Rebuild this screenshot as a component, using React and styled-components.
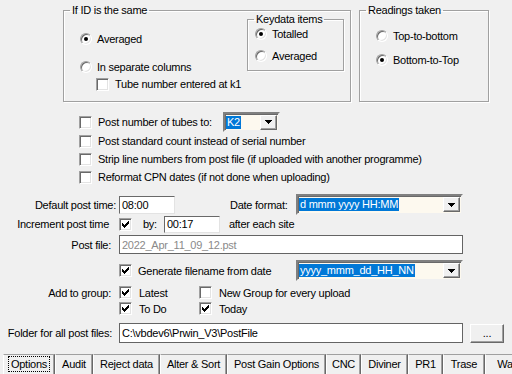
import React from "react";
import styled, { createGlobalStyle } from "styled-components";

const GlobalStyle = createGlobalStyle`
  html, body {
    margin: 0;
    padding: 0;
    background: #f0f0f0;
  }
  body {
    font-family: "Liberation Sans", Arial, sans-serif;
    font-size: 11px;
    letter-spacing: -0.25px;
    color: #000;
  }
`;

// --- Layout ---

const Window = styled.div`
  width: 512px;
  height: 374px;
  overflow: hidden;
  display: flex;
  flex-direction: column;
  background: #f0f0f0;
`;

const TopRow = styled.div`
  display: flex;
  gap: 8px;
  padding: 4px 0 0 63px;
`;

const Group = styled.fieldset`
  box-sizing: border-box;
  margin: 0;
  padding: 0;
  min-inline-size: 0;
  width: ${(p) => p.$w}px;
  height: ${(p) => p.$h}px;
  border: 1px solid #a0a0a0;
  box-shadow: 1px 1px 0 #fff, inset 1px 1px 0 #fff;
`;

const SubGroup = styled(Group)`
  margin: -4px 6px 0 auto;
  flex-shrink: 0;
`;

const Legend = styled.legend`
  margin-left: 6px;
  padding: 0 2px;
  line-height: 13px;
  font-size: 11px;
`;

const GroupBody = styled.div`
  display: flex;
`;

const Column = styled.div`
  display: flex;
  flex-direction: column;
  padding-left: ${(p) => p.$pl || 0}px;
`;

const OptionRow = styled.div`
  display: flex;
  align-items: center;
  gap: ${(p) => p.$gap ?? 5}px;
  height: ${(p) => p.$h || 16}px;
  margin-top: ${(p) => p.$mt || 0}px;
  padding-left: ${(p) => p.$pl || 0}px;
  white-space: nowrap;
`;

const CheckList = styled.div`
  display: flex;
  flex-direction: column;
  margin-top: 10px;
  padding-left: 79px;
`;

const FixedText = styled.span`
  width: ${(p) => p.$w}px;
  flex-shrink: 0;
`;

const Form = styled.div`
  display: flex;
  flex-direction: column;
  margin-top: 8px;
`;

const FormRow = styled.div`
  display: flex;
  align-items: center;
  width: ${(p) => (p.$free ? "auto" : "463px")};
  height: ${(p) => p.$h}px;
  margin-top: ${(p) => p.$mt || 0}px;
  white-space: nowrap;
`;

const FieldLabel = styled.span`
  box-sizing: border-box;
  width: 119px;
  flex-shrink: 0;
  text-align: right;
  padding-right: ${(p) => p.$pr ?? 8}px;
`;

const Text = styled.span`
  margin-left: ${(p) => p.$ml || 0}px;
`;

const Choice = styled.div`
  display: flex;
  align-items: center;
  gap: 7px;
  width: ${(p) => p.$w || 80}px;
`;

// --- Controls ---

const RadioDot = styled.span`
  box-sizing: border-box;
  position: relative;
  width: 12px;
  height: 12px;
  flex-shrink: 0;
  border-radius: 50%;
  background: #fff;
  border: 1px solid;
  border-color: #a0a0a0 #fff #fff #a0a0a0;
  box-shadow: inset 1px 1px 0 #696969, inset -1px -1px 0 #e3e3e3;

  &::after {
    content: "";
    display: ${(p) => (p.$on ? "block" : "none")};
    position: absolute;
    left: 3px;
    top: 3px;
    width: 4px;
    height: 4px;
    border-radius: 50%;
    background: #000;
  }
`;

const CheckBox = styled.span`
  box-sizing: border-box;
  display: flex;
  align-items: center;
  justify-content: center;
  width: 13px;
  height: 13px;
  flex-shrink: 0;
  background: #fff;
  border: 1px solid;
  border-color: #a0a0a0 #fff #fff #a0a0a0;
  box-shadow: inset 1px 1px 0 #696969, inset -1px -1px 0 #e3e3e3;
`;

const TextBox = styled.div`
  box-sizing: border-box;
  display: flex;
  align-items: center;
  width: ${(p) => p.$w}px;
  height: ${(p) => p.$h}px;
  margin-left: ${(p) => p.$ml || 0}px;
  padding-left: 2px;
  background: #fff;
  color: ${(p) => (p.$disabled ? "#8a8a8a" : "#000")};
  border: 1px solid;
  border-color: ${(p) =>
    p.$flat ? "#646464" : "#696969 #e3e3e3 #e3e3e3 #696969"};
  flex-shrink: 0;
`;

const Combo = styled.div`
  box-sizing: border-box;
  display: flex;
  align-items: center;
  justify-content: space-between;
  width: ${(p) => p.$w}px;
  height: ${(p) => p.$h || 21}px;
  margin-left: ${(p) => (p.$auto ? "auto" : `${p.$ml || 0}px`)};
  padding: 0 1px 0 1px;
  background: #fdf9ef;
  border: 2px solid;
  border-color: #808080 #f0f0f0 #f0f0f0 #808080;
  box-shadow: inset 1px 1px 0 #696969;
  flex-shrink: 0;
`;

const Selected = styled.span`
  background: #0078d7;
  color: #fff;
  padding: 0 1px;
  line-height: 13px;
`;

const DropButton = styled.span`
  box-sizing: border-box;
  display: flex;
  align-items: center;
  justify-content: center;
  width: 17px;
  height: 15px;
  background: #f0f0f0;
  border: 1px solid;
  border-color: #fff #696969 #696969 #fff;
  box-shadow: inset -1px -1px 0 #a0a0a0;
`;

const PushButton = styled.div`
  box-sizing: border-box;
  display: flex;
  align-items: center;
  justify-content: center;
  flex-shrink: 0;
  width: 34px;
  height: 19px;
  margin-left: 7px;
  background: #f0f0f0;
  border: 1px solid;
  border-color: #fff #696969 #696969 #fff;
  box-shadow: inset -1px -1px 0 #a0a0a0;
`;

const TabStrip = styled.div`
  display: flex;
  margin-top: 11px;
  padding-left: 3px;
`;

const Tab = styled.div`
  box-sizing: border-box;
  display: flex;
  align-items: center;
  justify-content: center;
  flex-shrink: 0;
  width: ${(p) => p.$w}px;
  height: 22px;
  padding-bottom: 3px;
  border-top: 1px solid #a0a0a0;
  border-left: 1px solid #fff;
  border-right: 1px solid #696969;
  box-shadow: inset -1px 0 0 #a0a0a0;
  background: #f0f0f0;
  white-space: nowrap;
`;

const Focus = styled.span`
  outline: 1px dotted #000;
  outline-offset: 1px;
  padding: 0 1px;
`;

// --- Small pieces ---

const Arrow = () => (
  <svg width="7" height="4" viewBox="0 0 7 4" shapeRendering="crispEdges">
    <path d="M0 0h7v1h-1v1h-1v1h-1v1h-1v-1h-1v-1h-1v-1h-1z" fill="#000" />
  </svg>
);

const Tick = () => (
  <svg width="7" height="7" viewBox="0 0 7 7" shapeRendering="crispEdges">
    <path
      d="M6 0h1v3h-1v1h-1v1h-1v1h-1v1h-1v-1h-1v-1h-1v-3h1v1h1v1h1v-1h1v-1h1v-1h1z"
      fill="#000"
    />
  </svg>
);

const Radio = ({ on, label }) => (
  <>
    <RadioDot $on={on} />
    <span>{label}</span>
  </>
);

const Check = ({ on }) => <CheckBox>{on && <Tick />}</CheckBox>;

const tabs = [
  { label: "Options", w: 52, active: true },
  { label: "Audit", w: 38 },
  { label: "Reject data", w: 67 },
  { label: "Alter & Sort", w: 67 },
  { label: "Post Gain Options", w: 99 },
  { label: "CNC", w: 35 },
  { label: "Diviner", w: 47 },
  { label: "PR1", w: 35 },
  { label: "Trase", w: 42 },
  { label: "Wa", w: 40 },
];

const postOptions = [
  "Post standard count instead of serial number",
  "Strip line numbers from post file (if uploaded with another programme)",
  "Reformat CPN dates (if not done when uploading)",
];

export default function App() {
  return (
    <Window>
      <GlobalStyle />

      <TopRow>
        <Group $w={288} $h={98}>
          <Legend>If ID is the same</Legend>
          <GroupBody>
            <Column $pl={16}>
              <OptionRow $mt={14}>
                <Radio on label="Averaged" />
              </OptionRow>
              <OptionRow $mt={12}>
                <Radio label="In separate columns" />
              </OptionRow>
              <OptionRow $mt={1} $pl={16} $gap={6}>
                <Check />
                <span>Tube number entered at k1</span>
              </OptionRow>
            </Column>
            <SubGroup $w={97} $h={58}>
              <Legend>Keydata items</Legend>
              <Column $pl={7}>
                <OptionRow>
                  <Radio on label="Totalled" />
                </OptionRow>
                <OptionRow $mt={6}>
                  <Radio label="Averaged" />
                </OptionRow>
              </Column>
            </SubGroup>
          </GroupBody>
        </Group>

        <Group $w={130} $h={98}>
          <Legend>Readings taken</Legend>
          <Column $pl={16}>
            <OptionRow $mt={11}>
              <Radio label="Top-to-bottom" />
            </OptionRow>
            <OptionRow $mt={8}>
              <Radio on label="Bottom-to-Top" />
            </OptionRow>
          </Column>
        </Group>
      </TopRow>

      <CheckList>
        <OptionRow $h={20} $gap={6}>
          <Check />
          <FixedText $w={119}>Post number of tubes to:</FixedText>
          <Combo $w={57} $h={20}>
            <Selected>K2</Selected>
            <DropButton>
              <Arrow />
            </DropButton>
          </Combo>
        </OptionRow>
        {postOptions.map((text) => (
          <OptionRow key={text} $h={18} $gap={6}>
            <Check />
            <span>{text}</span>
          </OptionRow>
        ))}
      </CheckList>

      <Form>
        <FormRow $h={21}>
          <FieldLabel $pr={3}>Default post time:</FieldLabel>
          <TextBox $w={56} $h={18}>08:00</TextBox>
          <Text $ml={55}>Date format:</Text>
          <Combo $w={167} $auto>
            <Selected>d mmm yyyy HH:MM</Selected>
            <DropButton>
              <Arrow />
            </DropButton>
          </Combo>
        </FormRow>

        <FormRow $h={18}>
          <FieldLabel $pr={10}>Increment post time</FieldLabel>
          <Check on />
          <Text $ml={11}>by:</Text>
          <TextBox $w={56} $h={17} $ml={7}>
            00:17
          </TextBox>
          <Text $ml={9}>after each site</Text>
        </FormRow>

        <FormRow $h={19} $mt={2}>
          <FieldLabel>Post file:</FieldLabel>
          <TextBox $w={344} $h={19} $flat $disabled>
            2022_Apr_11_09_12.pst
          </TextBox>
        </FormRow>

        <FormRow $h={21} $mt={6}>
          <FieldLabel />
          <Check on />
          <Text $ml={6}>Generate filename from date</Text>
          <Combo $w={167} $auto>
            <Selected>yyyy_mmm_dd_HH_NN</Selected>
            <DropButton>
              <Arrow />
            </DropButton>
          </Combo>
        </FormRow>

        <FormRow $h={15} $mt={4}>
          <FieldLabel>Add to group:</FieldLabel>
          <Choice>
            <Check on />
            <span>Latest</span>
          </Choice>
          <Choice>
            <Check />
            <span>New Group for every upload</span>
          </Choice>
        </FormRow>

        <FormRow $h={15} $mt={1}>
          <FieldLabel />
          <Choice>
            <Check on />
            <span>To Do</span>
          </Choice>
          <Choice>
            <Check on />
            <span>Today</span>
          </Choice>
        </FormRow>

        <FormRow $h={20} $mt={7} $free>
          <FieldLabel $pr={7}>Folder for all post files:</FieldLabel>
          <TextBox $w={344} $h={20} $flat>
            C:\vbdev6\Prwin_V3\PostFile
          </TextBox>
          <PushButton>...</PushButton>
        </FormRow>
      </Form>

      <TabStrip>
        {tabs.map((t) => (
          <Tab key={t.label} $w={t.w}>
            {t.active ? <Focus>{t.label}</Focus> : t.label}
          </Tab>
        ))}
      </TabStrip>
    </Window>
  );
}
